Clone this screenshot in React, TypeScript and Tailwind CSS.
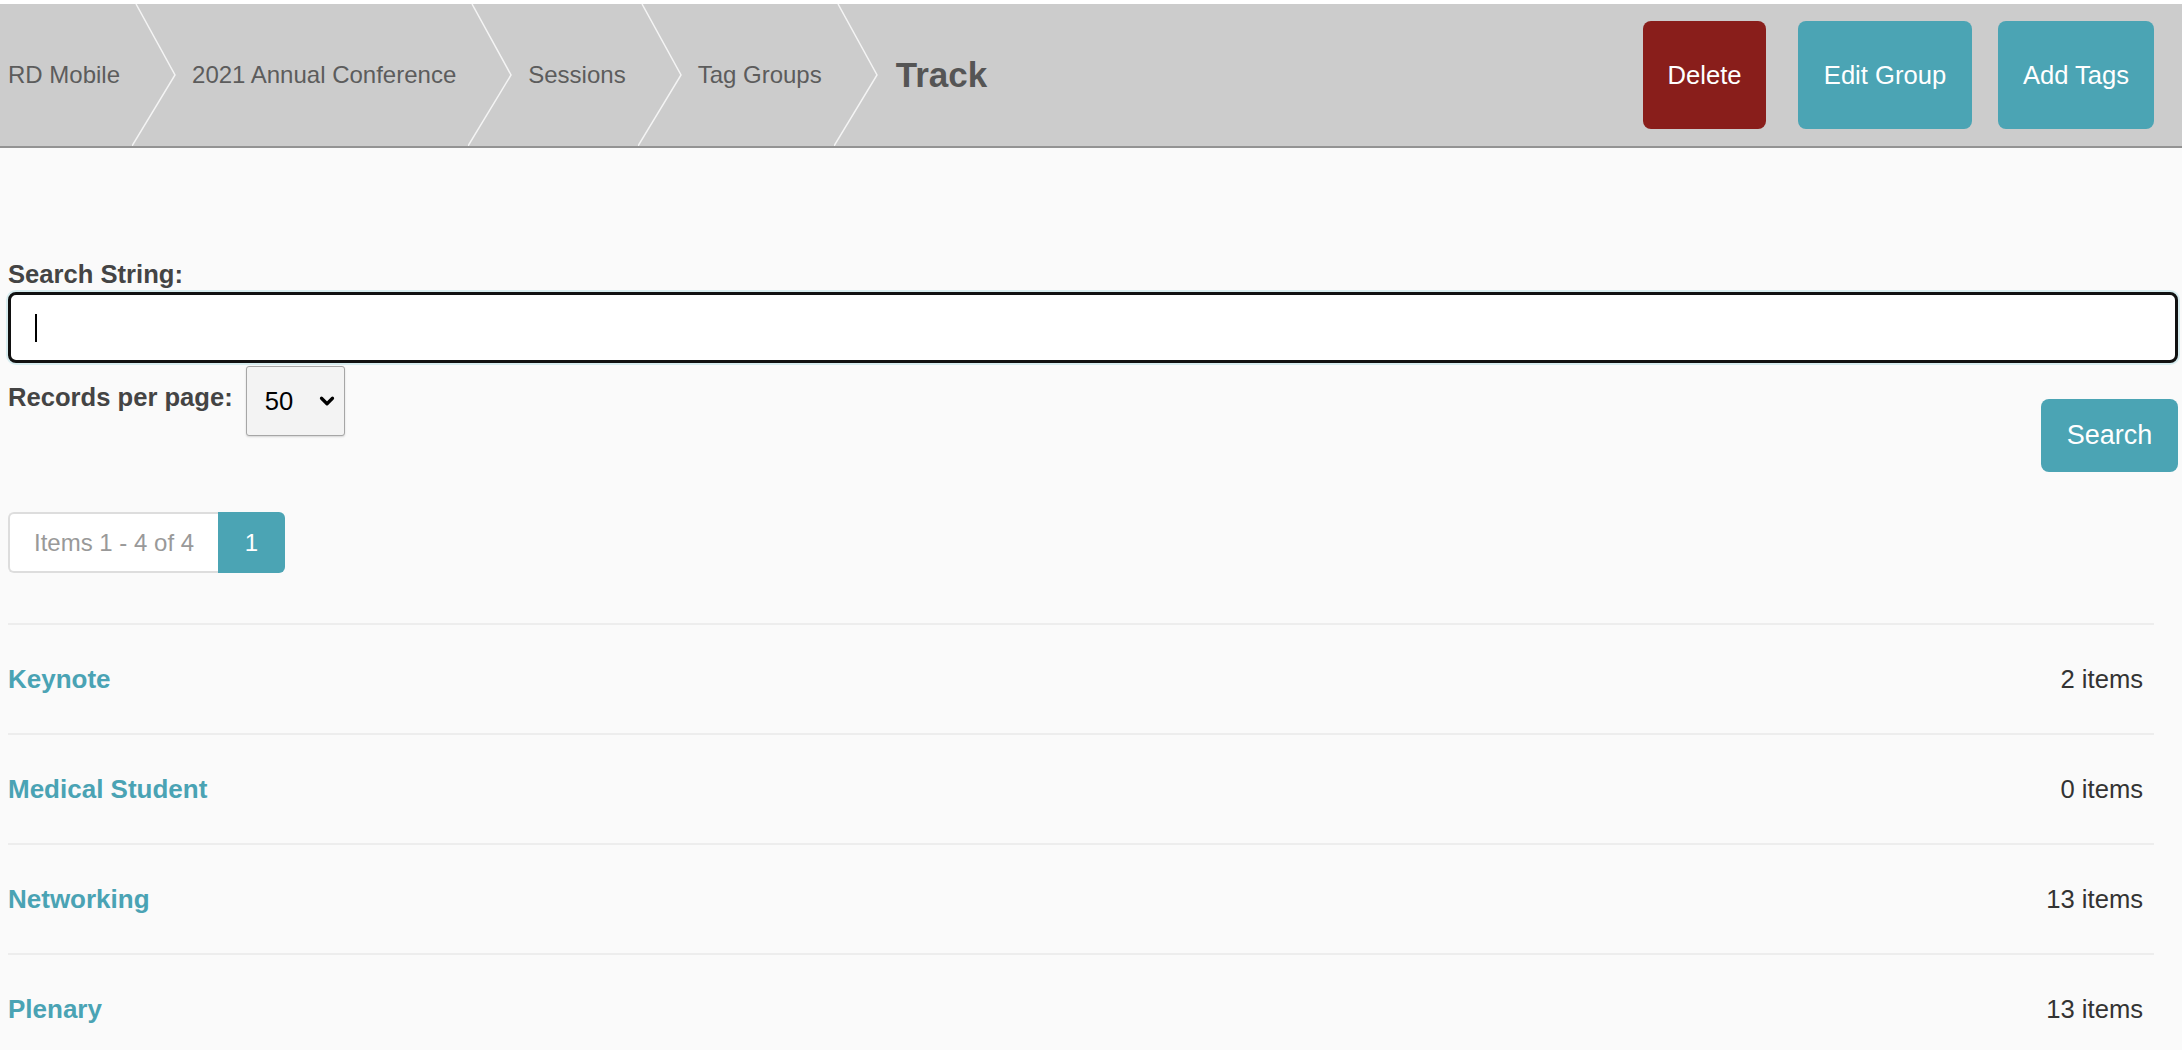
import React from 'react';
import { ChevronDown } from 'lucide-react';

const crumbs = ['RD Mobile', '2021 Annual Conference', 'Sessions', 'Tag Groups'];

const tags = [
  { name: 'Keynote', count: 2 },
  { name: 'Medical Student', count: 0 },
  { name: 'Networking', count: 13 },
  { name: 'Plenary', count: 13 },
];

const Chevron = () => (
  <svg width="44" height="142" viewBox="0 0 44 142" className="shrink-0">
    <polyline points="4,0 43,71 0,142" fill="none" stroke="#f4f4f4" strokeWidth="1.5" />
  </svg>
);

const Header = () => (
  <div className="bg-white pt-[4px]">
    <div className="flex h-[144px] items-center justify-between border-b-2 border-[#939393] bg-[#cccccc]">
      <div className="flex h-full items-center">
        {crumbs.map((c, i) => (
          <React.Fragment key={c}>
            <span className={`${i === 0 ? 'pl-[8px]' : 'pl-[16px]'} pr-[12px] text-[24px] text-[#5c5c5c]`}>{c}</span>
            <Chevron />
          </React.Fragment>
        ))}
        <span className="pl-[18px] text-[35px] font-bold text-[#555555]">Track</span>
      </div>
      <div className="flex items-center pr-[28px]">
        <button className="h-[108px] w-[123px] rounded-[8px] bg-[#891e1b] text-[25.6px] text-white">Delete</button>
        <button className="ml-[32px] h-[108px] w-[174px] rounded-[8px] bg-[#4ba4b4] text-[25.6px] text-white">Edit Group</button>
        <button className="ml-[26px] h-[108px] w-[156px] rounded-[8px] bg-[#4ba4b4] text-[25.6px] text-white">Add Tags</button>
      </div>
    </div>
  </div>
);

export default function App() {
  return (
    <div className="min-h-[1050px] bg-[#fafafa] font-['Liberation_Sans',Arial,sans-serif]">
      <Header />

      <div className="pl-[8px] pr-[4px]">
        <div className="mt-[112px] text-[25.6px] leading-[29px] font-bold text-[#444444]">Search String:</div>

        <div className="mt-[3px] flex h-[71px] items-center rounded-[8px] border-[3px] border-[#111111] bg-white pl-[24px] shadow-[0_0_0_2px_#d7ecef]">
          <span className="h-[28px] w-[2px] bg-black" />
        </div>

        <div className="mt-[3px] flex items-start justify-between">
          <div className="flex items-start">
            <span className="pt-[17px] text-[25.6px] leading-[29px] font-bold text-[#444444]">Records per page:</span>
            <div className="ml-[13px] flex h-[70px] w-[99px] items-center justify-between rounded-[3px] border border-[#a6a6a6] bg-[#f3f3f3] pl-[18px] pr-[6px] shadow-[0_1px_2px_rgba(0,0,0,0.15)]">
              <span className="text-[25.6px] text-black">50</span>
              <ChevronDown size={22} strokeWidth={3.5} className="text-black" />
            </div>
          </div>
          <button className="mt-[33px] h-[73px] w-[137px] rounded-[8px] bg-[#4ba4b4] text-[27px] text-white">Search</button>
        </div>

        <div className="mt-[40px] flex h-[61px] w-[277px]">
          <div className="flex items-center rounded-l-[6px] border-2 border-r-0 border-[#dddddd] bg-white px-[24px] text-[24px] text-[#999999]">
            Items 1 - 4 of 4
          </div>
          <div className="flex flex-1 items-center justify-center rounded-r-[6px] bg-[#4ba4b4] text-[24px] text-white">1</div>
        </div>

        <div className="mt-[50px] mr-[24px]">
          {tags.map((t) => (
            <div key={t.name} className="flex h-[110px] items-center justify-between border-t-2 border-[#ededed] pr-[11px]">
              <a className="text-[26px] font-bold text-[#4aa3b4]">{t.name}</a>
              <span className="text-[25.6px] text-[#333333]">{t.count} items</span>
            </div>
          ))}
        </div>
      </div>
    </div>
  );
}
